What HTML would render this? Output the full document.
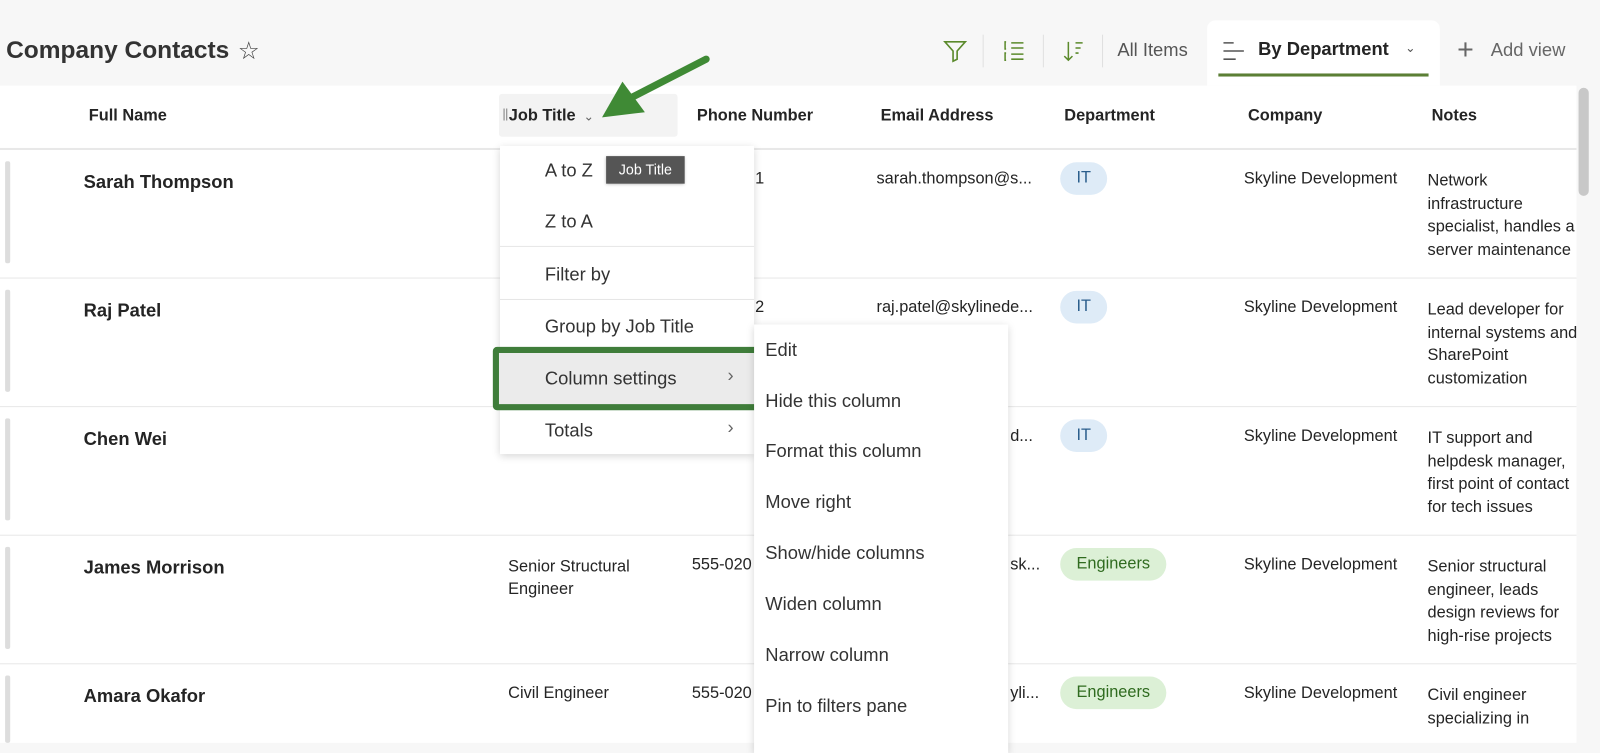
<!DOCTYPE html>
<html><head><style>
*{margin:0;padding:0;box-sizing:border-box}
body{width:1600px;height:728px;overflow:hidden;background:#f7f7f7;font-family:"Liberation Sans",sans-serif;color:#242424}
#w{position:absolute;left:0;top:0;width:1568px;height:714px;transform:scale(1.0204);transform-origin:0 0}
.a{position:absolute;white-space:nowrap}
.main{position:absolute;left:0;top:84px;width:1545px;height:644px;background:#fff}
.h{font-size:16px;font-weight:bold;top:105px}
.n{font-size:18px;font-weight:bold}
.t{font-size:16px}
.sep{position:absolute;left:0;width:1545px;height:1px;background:#e8e8e8}
.bar{position:absolute;left:5px;width:5px;background:#ddd;border-radius:2px}
.pill{position:absolute;height:32px;border-radius:16px;font-size:16px;line-height:32px;padding:0 16px}
.menu{position:absolute;background:#fff;box-shadow:0 2px 8px rgba(0,0,0,.18)}
.mi{position:absolute;font-size:18px;color:#333}
</style></head><body><div id="w">
<div class="a" style="left:6px;top:36px;font-size:24px;font-weight:bold;color:#333">Company Contacts</div>
<div class="a" style="left:233px;top:36px;font-size:24px;color:#444">☆</div>
<svg class="a" style="left:924px;top:38px" width="24" height="24" viewBox="0 0 24 24" fill="none" stroke="#5b8a2c" stroke-width="1.6"><path d="M2 3h20l-8 9v8l-4 2v-10z"/></svg>
<div class="a" style="left:963px;top:34px;width:1px;height:32px;background:#e0e0e0"></div>
<svg class="a" style="left:982px;top:38px" width="24" height="24" viewBox="0 0 24 24" fill="none" stroke="#5b8a2c" stroke-width="1.5"><path d="M9 4h12M9 9h12M9 15h12M9 20h12M4 3h-1v7h1M4 14h-1v7h1"/></svg>
<div class="a" style="left:1022px;top:34px;width:1px;height:32px;background:#e0e0e0"></div>
<svg class="a" style="left:1040px;top:38px" width="24" height="24" viewBox="0 0 24 24" fill="none" stroke="#5b8a2c" stroke-width="1.5"><path d="M7 3v18M3 17l4 4 4-4M14 4h7M14 9h5M14 14h3"/></svg>
<div class="a" style="left:1080px;top:34px;width:1px;height:32px;background:#e0e0e0"></div>
<div class="a" style="left:1095px;top:39px;font-size:18px;color:#555">All Items</div>
<div class="a" style="left:1183px;top:20px;width:228px;height:64px;background:#fff;border-radius:8px 8px 0 0"></div>
<svg class="a" style="left:1197px;top:38px" width="24" height="24" viewBox="0 0 24 24" stroke="#555" stroke-width="1.5"><path d="M2 4h10M2 12h20M2 20h12"/></svg>
<div class="a" style="left:1233px;top:38px;font-size:18px;font-weight:bold">By Department</div>
<div class="a" style="left:1377px;top:40px;font-size:12px;color:#555">⌄</div>
<div class="a" style="left:1194px;top:72px;width:206px;height:3px;background:#5b7f35"></div>
<div class="a" style="left:1428px;top:33px;font-size:28px;color:#666;font-weight:lighter">+</div>
<div class="a" style="left:1461px;top:39px;font-size:18px;color:#666">Add view</div>
<div class="main"></div>
<div class="a" style="left:1547px;top:86px;width:10px;height:106px;background:#c8c8c8;border-radius:5px"></div>
<div class="a h" style="left:87px">Full Name</div>
<div class="a" style="left:489px;top:92px;width:175px;height:42px;background:#f3f3f3;border-radius:3px"></div>
<div class="a h" style="left:492px"><span style="font-weight:normal;color:#999">‖</span>Job Title <span style="font-weight:normal;font-size:12px;color:#666">&nbsp;⌄</span></div>
<div class="a h" style="left:683px">Phone Number</div>
<div class="a h" style="left:863px">Email Address</div>
<div class="a h" style="left:1043px">Department</div>
<div class="a h" style="left:1223px">Company</div>
<div class="a h" style="left:1403px">Notes</div>
<div class="sep" style="top:145px;height:2px"></div>
<div class="sep" style="top:272px"></div><div class="sep" style="top:398px"></div><div class="sep" style="top:524px"></div><div class="sep" style="top:650px"></div>
<div class="bar" style="top:158px;height:100px"></div><div class="bar" style="top:284px;height:100px"></div><div class="bar" style="top:410px;height:100px"></div><div class="bar" style="top:536px;height:100px"></div><div class="bar" style="top:662px;height:66px"></div>
<div class="a n" style="left:82px;top:168px">Sarah Thompson</div>
<div class="a n" style="left:82px;top:294px">Raj Patel</div>
<div class="a n" style="left:82px;top:420px">Chen Wei</div>
<div class="a n" style="left:82px;top:546px">James Morrison</div>
<div class="a n" style="left:82px;top:672px">Amara Okafor</div>
<div class="a t" style="left:740px;top:167px">1</div>
<div class="a t" style="left:740px;top:293px">2</div>
<div class="a t" style="left:859px;top:167px">sarah.thompson@s...</div>
<div class="a t" style="left:859px;top:293px">raj.patel@skylinede...</div>
<div class="a t" style="left:990px;top:419px">d...</div>
<div class="a t" style="left:990px;top:545px">sk...</div>
<div class="a t" style="left:990px;top:671px">yli...</div>
<div class="a t" style="left:498px;top:545px;line-height:22px">Senior Structural<br>Engineer</div>
<div class="a t" style="left:498px;top:671px">Civil Engineer</div>
<div class="a t" style="left:678px;top:545px">555-020</div>
<div class="a t" style="left:678px;top:671px">555-020</div>
<div class="pill" style="left:1039px;top:159px;background:#deebf7;color:#2b5e8c">IT</div>
<div class="pill" style="left:1039px;top:285px;background:#deebf7;color:#2b5e8c">IT</div>
<div class="pill" style="left:1039px;top:411px;background:#deebf7;color:#2b5e8c">IT</div>
<div class="pill" style="left:1039px;top:537px;background:#dcf0d6;color:#2f6b1f">Engineers</div>
<div class="pill" style="left:1039px;top:663px;background:#dcf0d6;color:#2f6b1f">Engineers</div>
<div class="a t" style="left:1219px;top:167px">Skyline Development</div>
<div class="a t" style="left:1219px;top:293px">Skyline Development</div>
<div class="a t" style="left:1219px;top:419px">Skyline Development</div>
<div class="a t" style="left:1219px;top:545px">Skyline Development</div>
<div class="a t" style="left:1219px;top:671px">Skyline Development</div>
<div class="a t" style="left:1399px;top:167px;line-height:22.5px;width:146px;overflow:hidden">Network<br>infrastructure<br>specialist, handles a<br>server maintenance</div>
<div class="a t" style="left:1399px;top:293px;line-height:22.5px;width:146px;overflow:hidden">Lead developer for<br>internal systems and<br>SharePoint<br>customization</div>
<div class="a t" style="left:1399px;top:419px;line-height:22.5px;width:146px;overflow:hidden">IT support and<br>helpdesk manager,<br>first point of contact<br>for tech issues</div>
<div class="a t" style="left:1399px;top:545px;line-height:22.5px;width:146px;overflow:hidden">Senior structural<br>engineer, leads<br>design reviews for<br>high-rise projects</div>
<div class="a t" style="left:1399px;top:671px;line-height:22.5px;width:146px;overflow:hidden">Civil engineer<br>specializing in</div>
<div class="menu" style="left:490px;top:143px;width:249px;height:302px"></div>
<div class="mi" style="left:534px;top:157px">A to Z</div>
<div class="mi" style="left:534px;top:207px">Z to A</div>
<div class="a" style="left:490px;top:241px;width:249px;height:1px;background:#e6e6e6"></div>
<div class="mi" style="left:534px;top:259px">Filter by</div>
<div class="a" style="left:490px;top:293px;width:249px;height:1px;background:#e6e6e6"></div>
<div class="mi" style="left:534px;top:310px">Group by Job Title</div>
<div class="a" style="left:483px;top:340px;width:266px;height:62px;border:6px solid #3f7d3a;border-radius:4px;background:#ebebeb"></div>
<div class="mi" style="left:534px;top:361px">Column settings</div>
<div class="mi" style="left:713px;top:358px;color:#666">›</div>
<div class="mi" style="left:534px;top:412px">Totals</div>
<div class="mi" style="left:713px;top:409px;color:#666">›</div>
<div class="a" style="left:594px;top:153px;width:77px;height:27px;background:#555;color:#fff;font-size:14px;line-height:27px;text-align:center;box-shadow:0 1px 3px rgba(0,0,0,.3)">Job Title</div>
<div class="menu" style="left:739px;top:318px;width:249px;height:420px"></div>
<div class="mi" style="left:750px;top:333px">Edit</div>
<div class="mi" style="left:750px;top:383px">Hide this column</div>
<div class="mi" style="left:750px;top:432px">Format this column</div>
<div class="mi" style="left:750px;top:482px">Move right</div>
<div class="mi" style="left:750px;top:532px">Show/hide columns</div>
<div class="mi" style="left:750px;top:582px">Widen column</div>
<div class="mi" style="left:750px;top:632px">Narrow column</div>
<div class="mi" style="left:750px;top:682px">Pin to filters pane</div>
<svg class="a" style="left:580px;top:50px" width="120" height="75" viewBox="0 0 120 75"><path d="M112 8L40 45" stroke="#3f8a35" stroke-width="7" stroke-linecap="round"/><path d="M10 65L30 30L52 60Z" fill="#3f8a35"/></svg>
</div></body></html>
